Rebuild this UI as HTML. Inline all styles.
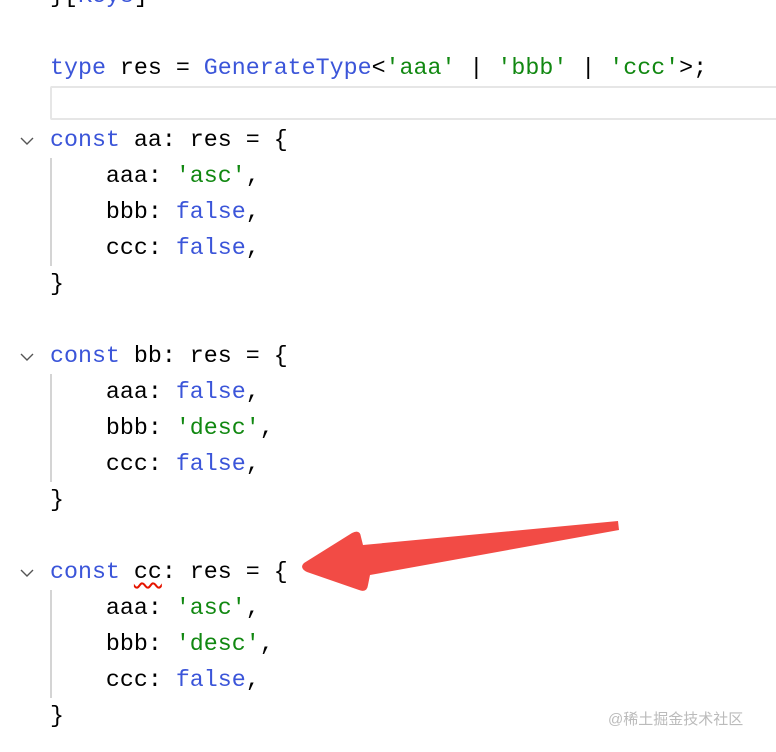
<!DOCTYPE html>
<html><head><style>
body{margin:0;background:#fff;width:776px;height:752px;overflow:hidden;position:relative}
.l{position:absolute;left:50px;height:36px;line-height:36px;font-family:"Liberation Mono","DejaVu Sans Mono",monospace;font-size:23.3px;color:#000;white-space:pre}
.k{color:#3b55d9}.s{color:#118811}
.g{position:absolute;left:50px;width:2px;background:#d4d4d4}
.c{position:absolute;left:20px;width:14px;height:10px}
.sq{text-decoration:underline wavy #e51400;text-decoration-thickness:1.5px;text-underline-offset:4px}
</style></head><body>
<div class="l" style="top:-22px">}[<span class="k">Keys</span>]</div>
<div class="l" style="top:50px"><span class="k">type</span> res = <span class="k">GenerateType</span>&lt;<span class="s">'aaa'</span> | <span class="s">'bbb'</span> | <span class="s">'ccc'</span>&gt;;</div>
<div style="position:absolute;left:50px;top:86px;width:730px;height:30px;border:2px solid #e6e6e6;border-right:none;border-radius:2px"></div>
<svg class="c" style="top:136px" viewBox="0 0 14 10"><path d="M1 2 L7 8 L13 2" fill="none" stroke="#555" stroke-width="1.4"/></svg>
<div class="l" style="top:122px"><span class="k">const</span> aa: res = {</div>
<div class="g" style="top:158px;height:108px"></div>
<div class="l" style="top:158px">    aaa: <span class="s">'asc'</span>,</div>
<div class="l" style="top:194px">    bbb: <span class="k">false</span>,</div>
<div class="l" style="top:230px">    ccc: <span class="k">false</span>,</div>
<div class="l" style="top:266px">}</div>
<svg class="c" style="top:352px" viewBox="0 0 14 10"><path d="M1 2 L7 8 L13 2" fill="none" stroke="#555" stroke-width="1.4"/></svg>
<div class="l" style="top:338px"><span class="k">const</span> bb: res = {</div>
<div class="g" style="top:374px;height:108px"></div>
<div class="l" style="top:374px">    aaa: <span class="k">false</span>,</div>
<div class="l" style="top:410px">    bbb: <span class="s">'desc'</span>,</div>
<div class="l" style="top:446px">    ccc: <span class="k">false</span>,</div>
<div class="l" style="top:482px">}</div>
<svg class="c" style="top:568px" viewBox="0 0 14 10"><path d="M1 2 L7 8 L13 2" fill="none" stroke="#555" stroke-width="1.4"/></svg>
<div class="l" style="top:554px"><span class="k">const</span> <span class="sq">cc</span>: res = {</div>
<div class="g" style="top:590px;height:108px"></div>
<div class="l" style="top:590px">    aaa: <span class="s">'asc'</span>,</div>
<div class="l" style="top:626px">    bbb: <span class="s">'desc'</span>,</div>
<div class="l" style="top:662px">    ccc: <span class="k">false</span>,</div>
<div class="l" style="top:698px">}</div>
<svg style="position:absolute;left:0;top:0" width="776" height="752"><path d="M304 563 L352 533 Q360 529 361 537 L363 545 L618 521 L619 530 L370 575 L368 585 Q367 593 359 590 L307 572 Q299 568 304 563 Z" fill="#f24b45"/></svg>
<div style="position:absolute;left:608px;top:708px;font-family:'Liberation Sans','Noto Sans CJK SC',sans-serif;font-size:15px;color:#bbb">@稀土掘金技术社区</div>
</body></html>
